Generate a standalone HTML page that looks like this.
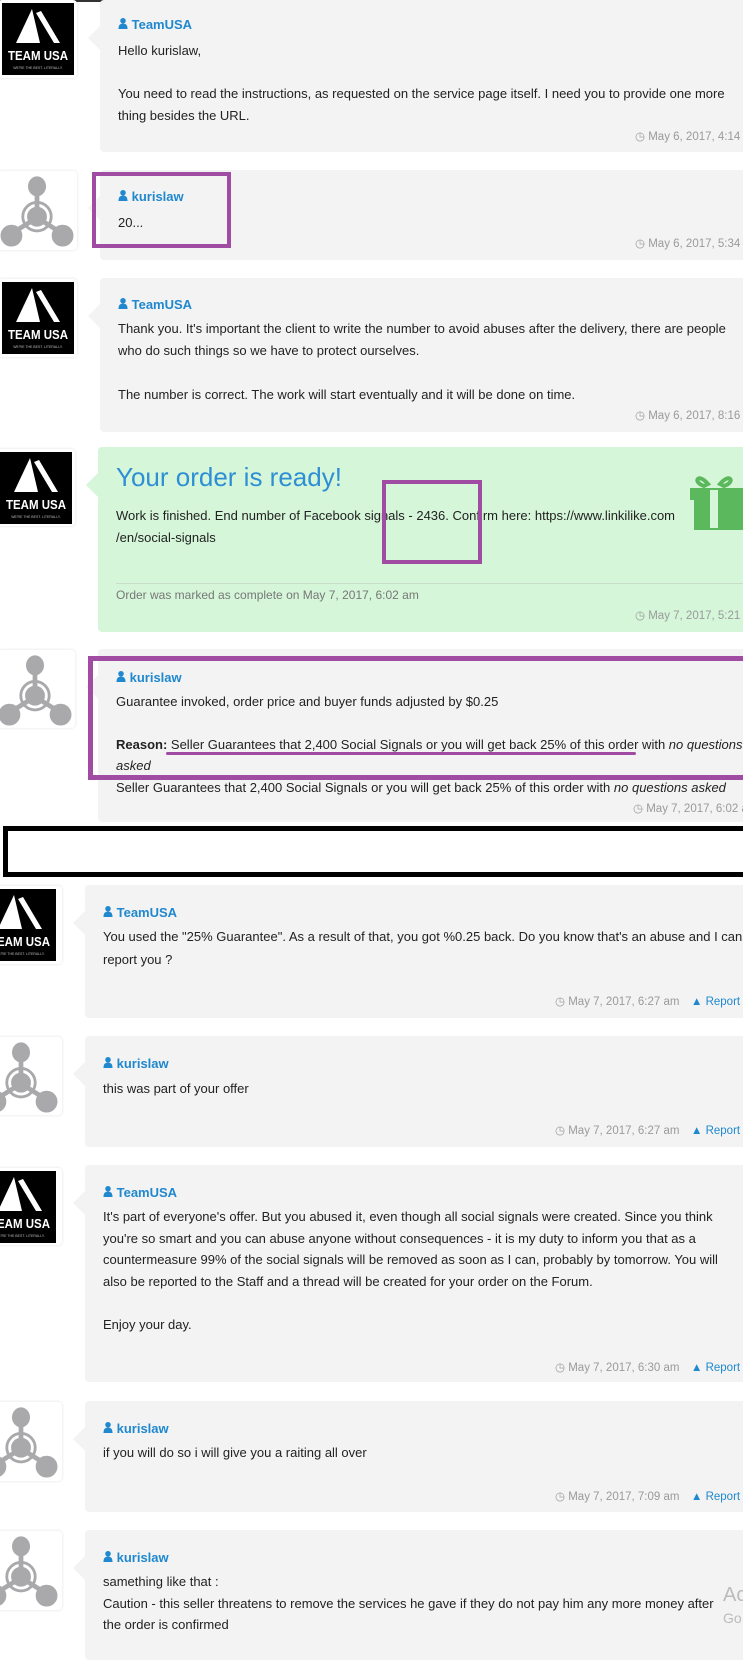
<!DOCTYPE html>
<html><head><meta charset="utf-8"><style>
*{margin:0;padding:0;box-sizing:border-box}
body{width:743px;height:1640px;overflow:hidden;background:#fff;position:relative;font-family:"Liberation Sans",Arial,sans-serif;font-size:13px;color:#222}
.b{position:absolute;background:#f3f3f3;border-radius:4px;right:-10px}
.b:before{content:"";position:absolute;left:-12px;top:26px;border:12px solid transparent;border-left:0;border-right-color:#f3f3f3}
.g{background:#d5f6d9}.g:before{border-right-color:#d5f6d9}
.t{position:absolute;white-space:nowrap;line-height:16px}
.n{font-weight:bold;color:#1f88cf}
.d{color:#9a9a9a;font-size:11.5px}
.r{color:#1f88cf;font-size:11.5px}
.av{position:absolute;background:#fff;border-radius:4px;box-shadow:0 0 3px rgba(0,0,0,.12)}
.pb{position:absolute;border:4px solid #a04ca3}
</style></head><body>
<div style="position:absolute;left:0;top:0;width:743px;height:2px;background:#333"></div>
<svg width="0" height="0" style="position:absolute"><defs>
<symbol id="usa" viewBox="0 0 72 72"><rect width="72" height="72" fill="#000"/><path d="M30 6 L14 40 L38 40 Z" fill="#fff"/><path d="M34 10 L39 8 L58 40 L52 40 Z" fill="#fff"/><text x="36" y="57" text-anchor="middle" fill="#fff" font-family="Liberation Sans" font-weight="bold" font-size="13" textLength="60" lengthAdjust="spacingAndGlyphs">TEAM USA</text><text x="36" y="66" text-anchor="middle" fill="#bbb" font-family="Liberation Sans" font-size="3.5">WE'RE THE BEST. LITERALLY.</text></symbol>
<symbol id="mol" viewBox="0 0 76 76"><g fill="#a9a9ab" stroke="#a9a9ab"><ellipse cx="38" cy="12" rx="9" ry="10"/><rect x="36" y="18" width="4" height="20"/><circle cx="38" cy="44" r="10"/><circle cx="38" cy="44" r="15" fill="none" stroke-width="3"/><line x1="30" y1="50" x2="14" y2="60" stroke-width="5"/><line x1="46" y1="50" x2="62" y2="60" stroke-width="5"/><circle cx="11" cy="64" r="11"/><circle cx="65" cy="64" r="11"/></g></symbol>
</defs></svg>
<svg width="0" height="0" style="position:absolute"><defs><symbol id="u" viewBox="0 0 10 12"><circle cx="5" cy="3" r="3" fill="#1f88cf"/><path d="M0 12 Q0 6 5 6 Q10 6 10 12Z" fill="#1f88cf"/></symbol></defs></svg>

<!-- post 1 -->
<div class="av" style="left:-2px;top:0;width:79px;height:78px"><svg style="position:absolute;left:4px;top:3px" width="72" height="72"><use href="#usa"/></svg></div>
<div class="b" style="left:100px;top:0;height:152px"></div>
<div class="t n" style="left:118px;top:17px"><svg width="10" height="11"><use href="#u"/></svg> TeamUSA</div>
<div class="t" style="left:118px;top:43px">Hello kurislaw,</div>
<div class="t" style="left:118px;top:86px">You need to read the instructions, as requested on the service page itself. I need you to provide one more</div>
<div class="t" style="left:118px;top:108px">thing besides the URL.</div>
<div class="t d" style="left:635px;top:129px">&#9719; May 6, 2017, 4:14 am</div>

<!-- post 2 -->
<div class="av" style="left:-2px;top:171px;width:79px;height:79px"><svg style="position:absolute;left:2px;top:4px" width="74" height="72"><use href="#mol"/></svg></div>
<div class="b" style="left:100px;top:170px;height:90px"></div>
<div class="t n" style="left:118px;top:189px"><svg width="10" height="11"><use href="#u"/></svg> kurislaw</div>
<div class="t" style="left:118px;top:215px">20...</div>
<div class="t d" style="left:635px;top:236px">&#9719; May 6, 2017, 5:34 am</div>
<div class="pb" style="left:92px;top:172px;width:139px;height:76px"></div>

<!-- post 3 -->
<div class="av" style="left:-2px;top:279px;width:79px;height:78px"><svg style="position:absolute;left:4px;top:3px" width="72" height="72"><use href="#usa"/></svg></div>
<div class="b" style="left:100px;top:278px;height:154px"></div>
<div class="t n" style="left:118px;top:297px"><svg width="10" height="11"><use href="#u"/></svg> TeamUSA</div>
<div class="t" style="left:118px;top:321px">Thank you. It's important the client to write the number to avoid abuses after the delivery, there are people</div>
<div class="t" style="left:118px;top:343px">who do such things so we have to protect ourselves.</div>
<div class="t" style="left:118px;top:387px">The number is correct. The work will start eventually and it will be done on time.</div>
<div class="t d" style="left:635px;top:408px">&#9719; May 6, 2017, 8:16 am</div>

<!-- post 4 green -->
<div class="av" style="left:-2px;top:449px;width:77px;height:77px"><svg style="position:absolute;left:2px;top:3px" width="72" height="72"><use href="#usa"/></svg></div>
<div class="b g" style="left:98px;top:447px;height:185px"></div>
<div class="t" style="left:116px;top:462px;font-size:26px;line-height:30px;color:#2f8fd4;font-weight:300">Your order is ready!</div>
<div class="t" style="left:116px;top:508px">Work is finished. End number of Facebook signals - 2436. Confirm here: https://www.linkilike.com</div>
<div class="t" style="left:116px;top:530px">/en/social-signals</div>
<div style="position:absolute;left:116px;right:0;top:583px;height:1px;background:#c8dcc9"></div>
<div class="t" style="left:116px;top:587px;color:#777;font-size:12px">Order was marked as complete on May 7, 2017, 6:02 am</div>
<div class="t d" style="left:635px;top:608px">&#9719; May 7, 2017, 5:21 am</div>
<svg style="position:absolute;left:690px;top:472px" width="60" height="60"><g fill="#5cb85c"><path d="M18 12 C8 0 2 10 14 14 Z M30 12 C40 0 46 10 34 14Z" fill="none" stroke="#5cb85c" stroke-width="4"/><rect x="0" y="16" width="60" height="12"/><rect x="4" y="28" width="52" height="30"/></g><rect x="20" y="18" width="8" height="38" fill="#d5f6d9"/></svg>
<div class="pb" style="left:382px;top:480px;width:100px;height:84px"></div>

<!-- post 5 -->
<div class="av" style="left:-2px;top:650px;width:77px;height:78px"><svg style="position:absolute;left:0;top:4px" width="74" height="72"><use href="#mol"/></svg></div>
<div class="b" style="left:98px;top:649px;height:173px"></div>
<div class="t n" style="left:116px;top:670px"><svg width="10" height="11"><use href="#u"/></svg> kurislaw</div>
<div class="t" style="left:116px;top:694px">Guarantee invoked, order price and buyer funds adjusted by $0.25</div>
<div class="t" style="left:116px;top:737px"><b>Reason:</b> Seller Guarantees that 2,400 Social Signals or you will get back 25% of this order with <i>no questions</i></div>
<div class="t" style="left:116px;top:758px"><i>asked</i></div>
<div class="t" style="left:116px;top:780px">Seller Guarantees that 2,400 Social Signals or you will get back 25% of this order with <i>no questions asked</i></div>
<div class="t d" style="left:633px;top:801px">&#9719; May 7, 2017, 6:02 am</div>
<div style="position:absolute;left:166px;top:752px;width:470px;height:3px;background:#a04ca3;border-radius:2px"></div>
<div class="pb" style="left:88px;top:656px;width:670px;height:124px;border-width:5px"></div>

<!-- black box -->
<div style="position:absolute;left:3px;top:826px;width:750px;height:51px;border:5px solid #000;background:#fff"></div>

<!-- post 6 -->
<div class="av" style="left:-16px;top:886px;width:78px;height:78px"><svg style="position:absolute;left:0;top:3px" width="72" height="72"><use href="#usa"/></svg></div>
<div class="b" style="left:85px;top:885px;height:133px"></div>
<div class="t n" style="left:103px;top:905px"><svg width="10" height="11"><use href="#u"/></svg> TeamUSA</div>
<div class="t" style="left:103px;top:929px">You used the "25% Guarantee". As a result of that, you got %0.25 back. Do you know that's an abuse and I can</div>
<div class="t" style="left:103px;top:952px">report you ?</div>
<div class="t d" style="left:555px;top:994px">&#9719; May 7, 2017, 6:27 am</div>
<div class="t r" style="left:691px;top:994px">&#9650; Report</div>

<!-- post 7 -->
<div class="av" style="left:-16px;top:1037px;width:78px;height:78px"><svg style="position:absolute;left:0;top:4px" width="74" height="72"><use href="#mol"/></svg></div>
<div class="b" style="left:85px;top:1036px;height:111px"></div>
<div class="t n" style="left:103px;top:1056px"><svg width="10" height="11"><use href="#u"/></svg> kurislaw</div>
<div class="t" style="left:103px;top:1081px">this was part of your offer</div>
<div class="t d" style="left:555px;top:1123px">&#9719; May 7, 2017, 6:27 am</div>
<div class="t r" style="left:691px;top:1123px">&#9650; Report</div>

<!-- post 8 -->
<div class="av" style="left:-16px;top:1168px;width:78px;height:77px"><svg style="position:absolute;left:0;top:3px" width="72" height="72"><use href="#usa"/></svg></div>
<div class="b" style="left:85px;top:1165px;height:217px"></div>
<div class="t n" style="left:103px;top:1185px"><svg width="10" height="11"><use href="#u"/></svg> TeamUSA</div>
<div class="t" style="left:103px;top:1209px">It's part of everyone's offer. But you abused it, even though all social signals were created. Since you think</div>
<div class="t" style="left:103px;top:1231px">you're so smart and you can abuse anyone without consequences - it is my duty to inform you that as a</div>
<div class="t" style="left:103px;top:1252px">countermeasure 99% of the social signals will be removed as soon as I can, probably by tomorrow. You will</div>
<div class="t" style="left:103px;top:1274px">also be reported to the Staff and a thread will be created for your order on the Forum.</div>
<div class="t" style="left:103px;top:1317px">Enjoy your day.</div>
<div class="t d" style="left:555px;top:1360px">&#9719; May 7, 2017, 6:30 am</div>
<div class="t r" style="left:691px;top:1360px">&#9650; Report</div>

<!-- post 9 -->
<div class="av" style="left:-16px;top:1402px;width:78px;height:79px"><svg style="position:absolute;left:0;top:4px" width="74" height="72"><use href="#mol"/></svg></div>
<div class="b" style="left:85px;top:1401px;height:111px"></div>
<div class="t n" style="left:103px;top:1421px"><svg width="10" height="11"><use href="#u"/></svg> kurislaw</div>
<div class="t" style="left:103px;top:1445px">if you will do so i will give you a raiting all over</div>
<div class="t d" style="left:555px;top:1489px">&#9719; May 7, 2017, 7:09 am</div>
<div class="t r" style="left:691px;top:1489px">&#9650; Report</div>

<!-- post 10 -->
<div class="av" style="left:-16px;top:1531px;width:78px;height:79px"><svg style="position:absolute;left:0;top:4px" width="74" height="72"><use href="#mol"/></svg></div>
<div class="b" style="left:85px;top:1530px;height:130px"></div>
<div class="t n" style="left:103px;top:1550px"><svg width="10" height="11"><use href="#u"/></svg> kurislaw</div>
<div class="t" style="left:103px;top:1574px">samething like that :</div>
<div class="t" style="left:103px;top:1596px">Caution - this seller threatens to remove the services he gave if they do not pay him any more money after</div>
<div class="t" style="left:103px;top:1617px">the order is confirmed</div>
<div class="t" style="left:723px;top:1584px;font-size:20px;line-height:22px;color:#bbb">Ac</div>
<div class="t" style="left:723px;top:1610px;font-size:14px;color:#bbb">Go</div>
</body></html>
